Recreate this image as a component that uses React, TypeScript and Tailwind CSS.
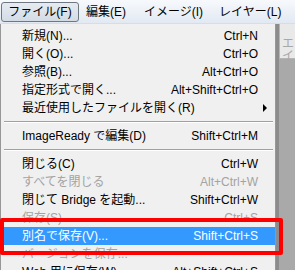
import React from "react"

type Item =
  | { sep: true }
  | { label: string; shortcut?: string; disabled?: boolean; active?: boolean; submenu?: boolean; sep?: false }

const items: Item[] = [
  { label: "新規(N)...", shortcut: "Ctrl+N" },
  { label: "開く(O)...", shortcut: "Ctrl+O" },
  { label: "参照(B)...", shortcut: "Alt+Ctrl+O" },
  { label: "指定形式で開く...", shortcut: "Alt+Shift+Ctrl+O" },
  { label: "最近使用したファイルを開く(R)", submenu: true },
  { sep: true },
  { label: "ImageReady で編集(D)", shortcut: "Shift+Ctrl+M" },
  { sep: true },
  { label: "閉じる(C)", shortcut: "Ctrl+W" },
  { label: "すべてを閉じる", shortcut: "Alt+Ctrl+W", disabled: true },
  { label: "閉じて Bridge を起動...", shortcut: "Shift+Ctrl+W" },
  { label: "保存(S)", shortcut: "Ctrl+S", disabled: true },
  { label: "別名で保存(V)...", shortcut: "Shift+Ctrl+S", active: true },
  { label: "バージョンを保存...", disabled: true },
  { label: "Web 用に保存(W)...", shortcut: "Alt+Shift+Ctrl+S" },
]

export default function App() {
  return (
    <div className="relative w-[295px] h-[270px] overflow-hidden bg-[#a9a9a9] text-[12px] leading-none text-black font-['Liberation_Sans','Noto_Sans_CJK_JP',sans-serif]">
      {/* menu bar */}
      <div className="h-[24px] flex items-center bg-gradient-to-b from-[#f7f9fc] to-[#e2e9f2] border-b border-[#d5dde7]">
        <div className="ml-[1px] h-[20px] w-[78px] flex items-center justify-center rounded-[3px] border border-[#6f7781] bg-gradient-to-b from-[#e6ebf1] to-[#d3dbe5]">
          ファイル(F)
        </div>
        <div className="ml-[7px]">編集(E)</div>
        <div className="ml-[18px]">イメージ(I)</div>
        <div className="ml-[16px]">レイヤー(L)</div>
      </div>

      <div className="flex">
        {/* dropdown */}
        <div className="w-[276px] h-[246px] bg-[#f0f0f0] border-l border-r border-[#979797] pt-[3px] pl-[2px]">
          {items.map((it, i) =>
            it.sep ? (
              <div key={i} className="py-[4px] pl-[1px] pr-[2px]">
                <div className="h-px bg-[#a0a0a0]" />
                <div className="h-px bg-white" />
              </div>
            ) : (
              <div
                key={i}
                className={`relative h-[18px] flex items-center justify-between pl-[19px] pr-[17px] ${
                  it.active ? "bg-[#3399ff] text-white" : it.disabled ? "text-[#a3a3a3]" : ""
                }`}
              >
                <span>{it.label}</span>
                {it.shortcut && <span>{it.shortcut}</span>}
                {it.submenu && (
                  <svg className="absolute right-[8px] top-[5px]" width="4" height="8" viewBox="0 0 4 8">
                    <path d="M0 0L4 4L0 8Z" fill="#000" />
                  </svg>
                )}
              </div>
            )
          )}
        </div>

        {/* window behind */}
        <div className="flex-1 flex">
          <div className="w-[3px] bg-[#8c8c8c]" />
          <div className="flex-1">
            <div className="h-[35px] bg-[#e9e9e9] border-l border-b border-[#b5b5b5] pl-[2px] pt-[14px] text-[#a8a8a8]">
              エイ
            </div>
          </div>
        </div>
      </div>

      {/* red annotation */}
      <div className="absolute left-0 top-[218px] w-[283px] h-[37px] border-[4px] border-[#ff0000] rounded-[2px]" />
    </div>
  )
}
